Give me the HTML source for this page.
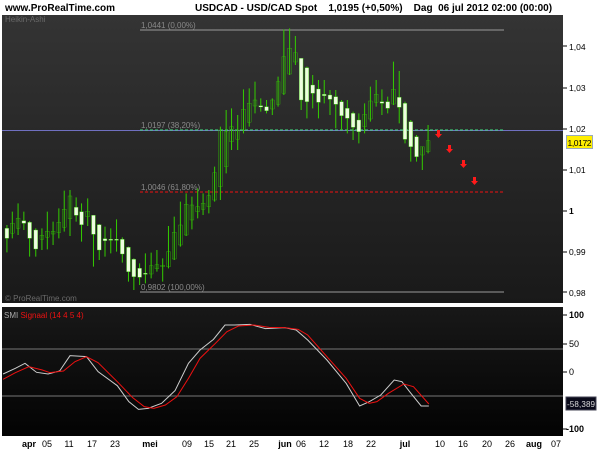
<!DOCTYPE html>
<html><head><meta charset="utf-8"><style>
html,body{margin:0;padding:0;background:#fff;width:600px;height:450px;overflow:hidden;font-family:"Liberation Sans",sans-serif}
svg{position:absolute;left:0;top:0}
.c{stroke:#33cc00;stroke-width:1;vector-effect:non-scaling-stroke}
.w{fill:#eefde0}
.d{fill:none}
</style></head><body>
<svg width="600" height="450" viewBox="0 0 600 450" xmlns="http://www.w3.org/2000/svg">
<defs>
<linearGradient id="g1" x1="0" y1="0" x2="0" y2="1"><stop offset="0" stop-color="#343434"/><stop offset="1" stop-color="#191919"/></linearGradient>
<linearGradient id="g2" x1="0" y1="0" x2="0" y2="1"><stop offset="0" stop-color="#181818"/><stop offset="1" stop-color="#030303"/></linearGradient>
</defs>
<text x="5" y="11" font-size="10" font-weight="bold" fill="#000">www.ProRealTime.com</text>
<text x="195" y="11" font-size="10" font-weight="bold" fill="#000" xml:space="preserve">USDCAD - USD/CAD Spot    1,0195 (+0,50%)    Dag  06 jul 2012 02:00 (00:00)</text>
<rect x="2" y="15" width="561" height="288" fill="url(#g1)"/>
<rect x="2" y="307" width="561" height="129" fill="url(#g2)"/>
<text x="5" y="22" font-size="8" fill="#6a6a6a">Heikin-Ashi</text>
<text x="5" y="301" font-size="8" fill="#6a6a6a">© ProRealTime.com</text>
<line x1="140" y1="30" x2="504" y2="30" stroke="#999" stroke-width="1"/>
<line x1="2" y1="130.5" x2="563" y2="130.5" stroke="#7070c0" stroke-width="1"/>
<line x1="140" y1="130" x2="504" y2="130" stroke="#40e080" stroke-width="1" stroke-dasharray="3,2"/>
<line x1="140" y1="192" x2="504" y2="192" stroke="#ee1111" stroke-width="1" stroke-dasharray="3,2"/>
<line x1="140" y1="292" x2="504" y2="292" stroke="#999" stroke-width="1"/>
<g font-size="8" fill="#8a8a8a">
<text x="141" y="28">1,0441 (0,00%)</text>
<text x="141" y="128">1,0197 (38,20%)</text>
<text x="141" y="190">1,0046 (61,80%)</text>
<text x="141" y="290">0,9802 (100,00%)</text>
</g>
<g transform="scale(0.384615,0.333333)">
<path class="c" d="M18 675V757M32 635V715M47 610V705M62 635V690M77 663V770M93 685V770M109 685V750M123 635V748M138 665V735M153 625V715M167 572V695M182 570V708M198 592V665M212 610V725M228 595V678M243 645V800M258 672V780M273 680V770M288 685V760M303 658V755M318 712V788M334 740V845M348 775V870M363 790V855M378 760V850M393 758V835M408 750V815M423 775V845M438 678V805M453 650V780M469 605V740M484 580V708M499 590V688M514 565V655M528 580V645M543 570V640M558 500V605M573 380V600M588 330V520M602 325V450M618 345V450M633 268V400M648 265V380M663 245V340M678 295V335M693 300V340M708 295V345M723 230V320M738 88V285M753 85V225M768 108V195M783 175V330M798 200V355M813 225V325M828 240V355M843 240V310M858 270V345M873 270V385M888 300V390M903 300V400M918 335V420M933 340V430M948 310V400M963 260V365M978 240V320M993 268V345M1008 290V340M1023 185V315M1038 213V370M1053 305V430M1068 360V485M1083 405V485M1098 440V510M1113 375V460"/>
<g class="c">
<rect class="w" x="13" y="685" width="10" height="30"/><rect class="d" x="27" y="670" width="10" height="30"/><rect class="d" x="42" y="655" width="10" height="30"/><rect class="w" x="57" y="662" width="10" height="8"/><rect class="w" x="72" y="667" width="10" height="48"/><rect class="w" x="88" y="690" width="10" height="57"/><rect class="d" x="104" y="706" width="10" height="12"/><rect class="d" x="118" y="694" width="10" height="18"/><rect class="d" x="133" y="694" width="10" height="8"/><rect class="d" x="148" y="667" width="10" height="31"/><rect class="d" x="162" y="628" width="10" height="54"/><rect class="d" x="177" y="588" width="10" height="68"/><rect class="w" x="193" y="622" width="10" height="24"/><rect class="w" x="207" y="635" width="10" height="39"/><rect class="d" x="223" y="634" width="10" height="16"/><rect class="w" x="238" y="646" width="10" height="57"/><rect class="w" x="253" y="674" width="10" height="76"/><rect class="w" x="268" y="716" width="10" height="6"/><rect class="w" x="283" y="718" width="10" height="3"/><rect class="w" x="298" y="718" width="10" height="3"/><rect class="w" x="313" y="718" width="10" height="44"/><rect class="w" x="329" y="742" width="10" height="73"/><rect class="w" x="343" y="778" width="10" height="52"/><rect class="w" x="358" y="805" width="10" height="27"/><rect class="w" x="373" y="820" width="10" height="3"/><rect class="d" x="388" y="797" width="10" height="25"/><rect class="d" x="403" y="794" width="10" height="12"/><rect class="d" x="418" y="796" width="10" height="4"/><rect class="d" x="433" y="755" width="10" height="45"/><rect class="d" x="448" y="697" width="10" height="80"/><rect class="d" x="464" y="675" width="10" height="60"/><rect class="d" x="479" y="613" width="10" height="92"/><rect class="d" x="494" y="615" width="10" height="45"/><rect class="d" x="509" y="620" width="10" height="15"/><rect class="d" x="523" y="610" width="10" height="18"/><rect class="d" x="538" y="587" width="10" height="33"/><rect class="d" x="553" y="518" width="10" height="82"/><rect class="d" x="568" y="390" width="10" height="170"/><rect class="d" x="583" y="395" width="10" height="105"/><rect class="d" x="597" y="380" width="10" height="45"/><rect class="d" x="613" y="390" width="10" height="28"/><rect class="d" x="628" y="328" width="10" height="62"/><rect class="d" x="643" y="310" width="10" height="57"/><rect class="d" x="658" y="300" width="10" height="18"/><rect class="w" x="673" y="317" width="10" height="4"/><rect class="w" x="688" y="320" width="10" height="12"/><rect class="d" x="703" y="300" width="10" height="27"/><rect class="d" x="718" y="245" width="10" height="68"/><rect class="d" x="733" y="170" width="10" height="110"/><rect class="d" x="748" y="145" width="10" height="77"/><rect class="d" x="763" y="158" width="10" height="28"/><rect class="w" x="778" y="175" width="10" height="125"/><rect class="w" x="793" y="203" width="10" height="102"/><rect class="w" x="808" y="255" width="10" height="25"/><rect class="w" x="823" y="267" width="10" height="40"/><rect class="w" x="838" y="283" width="10" height="4"/><rect class="w" x="853" y="285" width="10" height="13"/><rect class="w" x="868" y="290" width="10" height="23"/><rect class="w" x="883" y="305" width="10" height="42"/><rect class="w" x="898" y="325" width="10" height="30"/><rect class="w" x="913" y="340" width="10" height="42"/><rect class="w" x="928" y="360" width="10" height="35"/><rect class="d" x="943" y="343" width="10" height="37"/><rect class="d" x="958" y="303" width="10" height="54"/><rect class="d" x="973" y="283" width="10" height="24"/><rect class="w" x="988" y="305" width="10" height="5"/><rect class="w" x="1003" y="305" width="10" height="20"/><rect class="d" x="1018" y="268" width="10" height="44"/><rect class="w" x="1033" y="292" width="10" height="30"/><rect class="w" x="1048" y="310" width="10" height="108"/><rect class="w" x="1063" y="365" width="10" height="75"/><rect class="w" x="1078" y="410" width="10" height="60"/><rect class="d" x="1093" y="440" width="10" height="25"/><rect class="d" x="1108" y="422" width="10" height="33"/>
</g>
</g>
<g fill="#ff1a1a">
<path d="M437 130h3v4h2l-3.5 4-3.5-4h2z"/>
<path d="M448 145h3v4h2l-3.5 4-3.5-4h2z"/>
<path d="M462 160h3v4h2l-3.5 4-3.5-4h2z"/>
<path d="M473 177h3v4h2l-3.5 4-3.5-4h2z"/>
</g>
<g font-size="8.5" fill="#000">
<line x1="563" y1="46" x2="567" y2="46" stroke="#000"/><text x="569" y="50">1,04</text>
<line x1="563" y1="88" x2="567" y2="88" stroke="#000"/><text x="569" y="91">1,03</text>
<line x1="563" y1="129" x2="567" y2="129" stroke="#000"/><text x="569" y="132">1,02</text>
<line x1="563" y1="170" x2="567" y2="170" stroke="#000"/><text x="569" y="173">1,01</text>
<line x1="563" y1="211" x2="567" y2="211" stroke="#000"/><text x="569" y="214" font-weight="bold">1</text>
<line x1="563" y1="252" x2="567" y2="252" stroke="#000"/><text x="569" y="255">0,99</text>
<line x1="563" y1="292" x2="567" y2="292" stroke="#000"/><text x="569" y="296">0,98</text>
</g>
<rect x="566.5" y="135.5" width="26" height="13" fill="#ffee00" stroke="#9ab"/>
<text x="567.5" y="146" font-size="8.5" fill="#000" textLength="24">1,0172</text>
<line x1="2" y1="349" x2="563" y2="349" stroke="#777"/>
<line x1="2" y1="396" x2="563" y2="396" stroke="#777"/>
<text x="4" y="318" font-size="8" fill="#aaa">SMI <tspan fill="#ee1111">Signaal (14 4 5 4)</tspan></text>
<g transform="translate(0,300) scale(0.384615,0.333333)" fill="none">
<polyline stroke="#cccccc" stroke-width="1" vector-effect="non-scaling-stroke" points="8,222 40,205 65,190 95,217 125,222 155,213 182,167 225,170 255,215 305,257 335,305 360,328 385,325 420,310 455,272 490,190 520,150 555,118 585,75 610,75 650,73 690,86 740,83 770,90 800,120 850,180 900,250 935,318 960,305 990,285 1025,240 1045,245 1065,275 1095,318 1115,318"/>
<polyline stroke="#ee1111" stroke-width="1" vector-effect="non-scaling-stroke" points="8,238 40,218 75,200 110,210 130,218 165,213 195,185 225,170 255,188 305,245 345,293 375,320 400,325 430,315 460,290 490,235 520,175 560,130 590,95 620,78 660,75 700,82 740,83 775,88 800,105 850,170 900,235 935,295 960,310 980,305 1010,280 1050,252 1075,260 1115,312"/>
</g>
<g font-size="9" fill="#000" font-weight="bold">
<line x1="563" y1="315" x2="567" y2="315" stroke="#000"/><text x="569" y="318">100</text>
<line x1="563" y1="344" x2="567" y2="344" stroke="#000"/><text x="569" y="347" font-weight="normal">50</text>
<line x1="563" y1="372" x2="567" y2="372" stroke="#000"/><text x="569" y="375" font-weight="normal">0</text>
<line x1="563" y1="429" x2="567" y2="429" stroke="#000"/><text x="566" y="432">-100</text>
</g>
<rect x="566" y="397" width="30" height="13" fill="#0a0a1a" stroke="#445"/>
<text x="567" y="407" font-size="8" fill="#ddd" textLength="28">-58,389</text>
<g font-size="9" fill="#000" text-anchor="middle">
<text x="29" y="447" font-weight="bold">apr</text><text x="47" y="447">05</text><text x="69" y="447">11</text><text x="92" y="447">17</text><text x="115" y="447">23</text><text x="150" y="447" font-weight="bold">mei</text><text x="187" y="447">09</text><text x="209" y="447">15</text><text x="231" y="447">21</text><text x="254" y="447">25</text><text x="285" y="447" font-weight="bold">jun</text><text x="301" y="447">06</text><text x="324" y="447">12</text><text x="348" y="447">18</text><text x="371" y="447">22</text><text x="405" y="447" font-weight="bold">jul</text><text x="440" y="447">10</text><text x="463" y="447">16</text><text x="487" y="447">20</text><text x="510" y="447">26</text><text x="534" y="447" font-weight="bold">aug</text><text x="556" y="447">07</text>
</g>
</svg>
</body></html>
